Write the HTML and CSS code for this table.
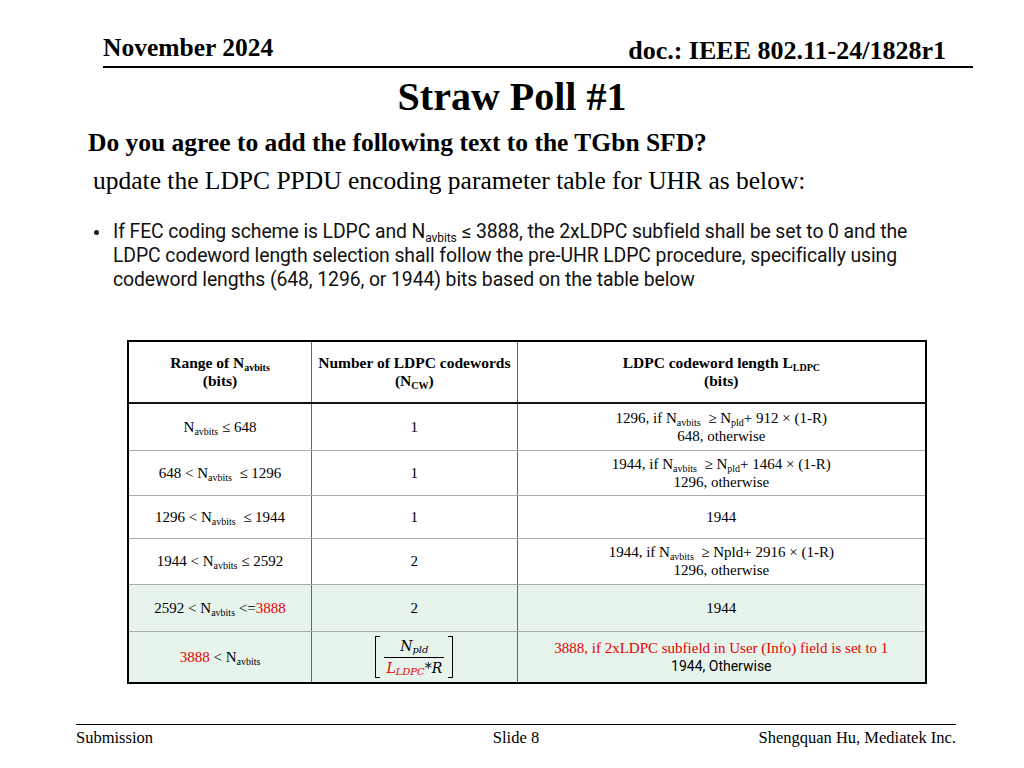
FILE: index.html
```html
<!DOCTYPE html>
<html>
<head>
<meta charset="utf-8">
<link rel="stylesheet" href="styles.css">
</head>
<body>
<div class="slide">
  <header class="top">
    <span class="date">November 2024</span>
    <span class="doc">doc.: IEEE 802.11-24/1828r1</span>
  </header>
  <h1 class="title">Straw Poll #1</h1>
  <p class="question">Do you agree to add the following text to the TGbn SFD?</p>
  <p class="update">update the LDPC PPDU encoding parameter table for UHR as below:</p>
  <ul class="bullets">
    <li>If FEC coding scheme is LDPC and N<sub>avbits</sub> ≤ 3888, the 2xLDPC subfield shall be set to 0 and the<br>LDPC codeword length selection shall follow the pre-UHR LDPC procedure, specifically using<br>codeword lengths (648, 1296, or 1944) bits based on the table below</li>
  </ul>
  <table class="ldpc">
    <colgroup>
      <col class="c1"><col class="c2"><col class="c3">
    </colgroup>
    <thead>
      <tr class="r0">
        <th>Range of N<sub>avbits</sub><br>(bits)</th>
        <th>Number of LDPC codewords<br>(N<sub>CW</sub>)</th>
        <th>LDPC codeword length L<sub>LDPC</sub><br>(bits)</th>
      </tr>
    </thead>
    <tbody>
      <tr class="r1">
        <td>N<sub>avbits</sub> ≤ 648</td>
        <td>1</td>
        <td>1296, if N<sub>avbits</sub> &nbsp;≥ N<sub>pld</sub>+ 912 × (1-R)<br>648, otherwise</td>
      </tr>
      <tr class="r2">
        <td>648 &lt; N<sub>avbits</sub> &nbsp;≤ 1296</td>
        <td>1</td>
        <td>1944, if N<sub>avbits</sub> &nbsp;≥ N<sub>pld</sub>+ 1464 × (1-R)<br>1296, otherwise</td>
      </tr>
      <tr class="r3">
        <td>1296 &lt; N<sub>avbits</sub> &nbsp;≤ 1944</td>
        <td>1</td>
        <td>1944</td>
      </tr>
      <tr class="r4">
        <td>1944 &lt; N<sub>avbits</sub> ≤ 2592</td>
        <td>2</td>
        <td>1944, if N<sub>avbits</sub> &nbsp;≥ Npld+ 2916 × (1-R)<br>1296, otherwise</td>
      </tr>
      <tr class="r5 green">
        <td>2592 &lt; N<sub>avbits</sub> &lt;=<span class="red">3888</span></td>
        <td>2</td>
        <td>1944</td>
      </tr>
      <tr class="r6 green">
        <td><span class="red">3888</span> &lt; N<sub>avbits</sub></td>
        <td>
          <span class="formula">
            <span class="brk left"></span>
            <span class="frac">
              <span class="num">N<sub>pld</sub></span>
              <span class="den"><span class="red">L<sub>LDPC</sub></span>*R</span>
            </span>
            <span class="brk right"></span>
          </span>
        </td>
        <td><span class="red">3888, if 2xLDPC subfield in User (Info) field is set to 1</span><br><span class="sans">1944, Otherwise</span></td>
      </tr>
    </tbody>
  </table>
  <footer class="bottom">
    <span class="sub">Submission</span>
    <span class="slno">Slide 8</span>
    <span class="author">Shengquan Hu, Mediatek Inc.</span>
  </footer>
</div>
</body>
</html>
```

FILE: styles.css
```css
* { box-sizing: border-box; }
html, body { margin: 0; padding: 0; background: #fff; }
body { font-family: "Liberation Serif", "Times New Roman", serif; color: #000; }

.slide {
  width: 1024px;
  height: 768px;
  display: flex;
  flex-direction: column;
  overflow: hidden;
}

.top {
  margin: 37px 0 0 103px;
  width: 870px;
  height: 31px;
  padding-right: 27px;
  display: flex;
  justify-content: space-between;
  align-items: flex-end;
  border-bottom: 2px solid #000;
  font-weight: bold;
  font-size: 25.5px;
  line-height: 26px;
}
.top .date { margin-bottom: 5px; }
.top .doc { margin-bottom: 2px; font-size: 26px; }

.title {
  margin: 6px 0 0 0;
  text-align: center;
  font-size: 40px;
  line-height: 46px;
  font-weight: bold;
}

.question {
  margin: 8px 0 0 88px;
  font-size: 25.5px;
  line-height: 30px;
  font-weight: bold;
}

.update {
  margin: 8px 0 0 93px;
  font-size: 25.5px;
  line-height: 30px;
}

.bullets {
  margin: 24px 0 0 93px;
  padding: 0;
  list-style: none;
  font-family: Roboto, "Liberation Sans", sans-serif;
  font-size: 19.4px;
  line-height: 24px;
  color: #111;
}
.bullets li {
  position: relative;
  padding-left: 20px;
  white-space: nowrap;
  letter-spacing: -0.1px;
}
.bullets li::before {
  content: "";
  position: absolute;
  left: 1px;
  top: 10px;
  width: 5px;
  height: 5px;
  border-radius: 50%;
  background: #222;
}
.bullets sub { font-size: 12px; vertical-align: -4px; line-height: 0; }

.ldpc {
  margin: 48px 0 0 127px;
  width: 800px;
  border-collapse: collapse;
  border: 2px solid #000;
  font-size: 15px;
  line-height: 18px;
  text-align: center;
}
.ldpc col.c1 { width: 184px; }
.ldpc col.c2 { width: 206px; }
.ldpc col.c3 { width: 410px; }
.ldpc th, .ldpc td {
  padding: 0 4px;
  border-left: 1px solid #666;
  border-right: 1px solid #666;
  border-top: 1px solid #aaa;
  border-bottom: 1px solid #aaa;
  vertical-align: middle;
}
.ldpc th { font-size: 15.5px; font-weight: bold; }
.ldpc thead tr { border-bottom: 2px solid #111; }
.ldpc sub { font-size: 10px; vertical-align: -3px; line-height: 0; }

.r0 { height: 62px; }
.r1 { height: 47px; }
.r2 { height: 45px; }
.r3 { height: 43px; }
.r4 { height: 46px; }
.r5 { height: 47px; }
.r6 { height: 52px; }
.green td { background: #e6f4ec; }

.red { color: #e60000; }
.sans { font-family: Roboto, "Liberation Sans", sans-serif; font-size: 14px; }

.formula {
  display: inline-flex;
  align-items: stretch;
  vertical-align: middle;
  font-family: "DejaVu Serif", serif;
  font-style: italic;
  font-size: 14px;
  line-height: 18px;
}
.formula sub { font-size: 10px; vertical-align: -2px; }
.brk {
  width: 5px;
  border-top: 1.5px solid #000;
  border-bottom: 1.5px solid #000;
}
.brk.left { border-left: 1.5px solid #000; margin-right: 4px; }
.brk.right { border-right: 1.5px solid #000; margin-left: 4px; }
.frac {
  display: flex;
  flex-direction: column;
  align-items: center;
  padding: 1px 0;
}
.frac .num { padding: 0 4px 2px; border-bottom: 1px solid #000; width: 100%; text-align: center; }
.frac .den { padding: 1px 2px 0; }

.bottom {
  margin: auto 0 0 76px;
  width: 880px;
  height: 44px;
  border-top: 1px solid #000;
  display: grid;
  grid-template-columns: 1fr auto 1fr;
  align-items: start;
  padding-top: 3px;
  font-size: 16.5px;
  line-height: 20px;
}
.bottom .author { justify-self: end; }
```
